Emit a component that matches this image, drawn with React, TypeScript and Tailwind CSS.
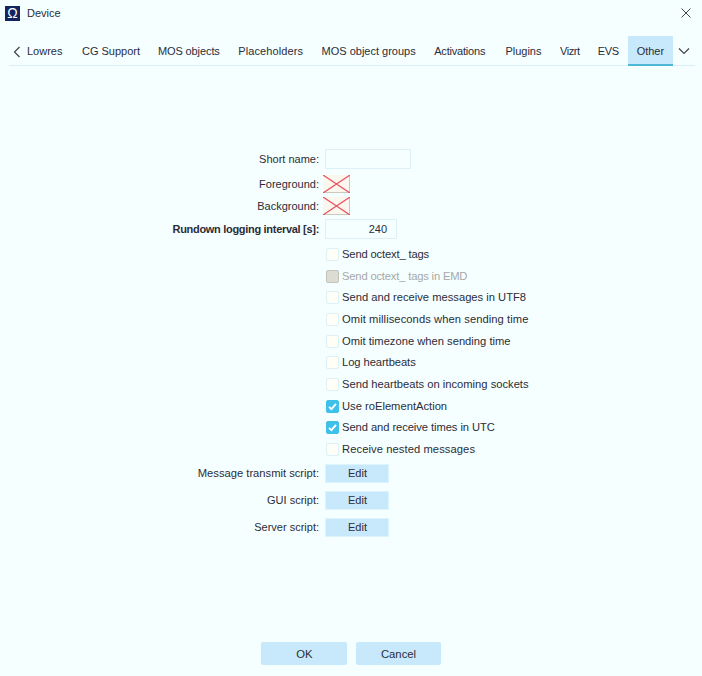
import React from "react";

function X() {
  return (
    <svg width="27" height="18" viewBox="0 0 27 18" className="block">
      <rect x="0" y="0" width="27" height="18" fill="#fbf7ee" />
      <path d="M0 17.5H27M26.5 0V18" stroke="#c9c9c0" strokeWidth="1" fill="none" />
      <path d="M0 0L27 18M27 0L0 18" stroke="#e8505f" strokeWidth="1.2" fill="none" />
    </svg>
  );
}

function Row({ label, labelClass, className, children }: { label?: string; labelClass?: string; className?: string; children?: React.ReactNode }) {
  return (
    <div className={"flex items-center " + (className ?? "")}>
      <div className={"w-[319px] text-right shrink-0 " + (labelClass ?? "")}>{label}</div>
      {children}
    </div>
  );
}

const tabs: [string, string][] = [
  ["Lowres", "mr-px"],
  ["CG Support", "-mr-[0.7px]"],
  ["MOS objects", "tracking-[-0.1px]"],
  ["Placeholders", "tracking-[0.1px]"],
  ["MOS object groups", ""],
  ["Activations", "tracking-[-0.2px] mr-[1.7px]"],
  ["Plugins", ""],
  ["Vizrt", "tracking-[-0.4px] -mr-[0.5px]"],
  ["EVS", "tracking-[-0.3px]"],
];

const checks: [string, string, string][] = [
  ["Send octext_ tags", "", "tracking-[-0.15px]"],
  ["Send octext_ tags in EMD", "d", "tracking-[-0.17px]"],
  ["Send and receive messages in UTF8", "", ""],
  ["Omit milliseconds when sending time", "", "tracking-[0.07px]"],
  ["Omit timezone when sending time", "", ""],
  ["Log heartbeats", "", "tracking-[-0.07px]"],
  ["Send heartbeats on incoming sockets", "", ""],
  ["Use roElementAction", "c", ""],
  ["Send and receive times in UTC", "c", "tracking-[-0.07px]"],
  ["Receive nested messages", "", "tracking-[0.08px]"],
];

export default function App() {
  return (
    <div className="w-[702px] h-[676px] bg-[#f5ffff] text-[#2c2c38] text-[11px] flex flex-col overflow-hidden" style={{ fontFamily: '"Liberation Sans", Arial, sans-serif' }}>
      <div className="h-[26px] flex items-center pl-[5px] pr-[10px] shrink-0">
        <div className="w-[15px] h-[15px] bg-[#14245e] text-white flex items-center justify-center text-[14px] leading-none">Ω</div>
        <span className="ml-[7px] flex-1">Device</span>
        <svg width="12" height="12" viewBox="0 0 12 12">
          <path d="M1.5 1.5L10.5 10.5M10.5 1.5L1.5 10.5" stroke="#444" strokeWidth="1" fill="none" />
        </svg>
      </div>
      <div className="h-[30px] mt-[10px] ml-[9px] mr-[7px] flex items-stretch border-b border-[#d8f0f4] shrink-0">
        <div className="w-[18px] flex items-center pl-[4px] pt-[2px]">
          <svg width="8" height="12" viewBox="0 0 8 12">
            <path d="M6.5 1L1.5 6L6.5 11" stroke="#444" strokeWidth="1.2" fill="none" />
          </svg>
        </div>
        <div className="flex items-center gap-[18.5px] pt-[2px]">
          {tabs.map(([t, c]) => (
            <span key={t} className={c}>{t}</span>
          ))}
        </div>
        <div className="ml-[9px] w-[45px] bg-[#c8e9fb] border-b-2 border-[#4fb8d8] flex items-center justify-center -mb-px pt-[3px]">Other</div>
        <div className="ml-[5px] flex items-center">
          <svg width="12" height="8" viewBox="0 0 12 8">
            <path d="M1 1.5L6 6.5L11 1.5" stroke="#444" strokeWidth="1.2" fill="none" />
          </svg>
        </div>
      </div>
      <div className="flex-1 flex flex-col pt-[83px]">
        <Row label="Short name:" className="h-[20px]">
          <div className="ml-[6px] w-[86px] h-[20px] border border-[#dcf0f6]" />
        </Row>
        <Row label="Foreground:" className="h-[18px] mt-[6px]">
          <div className="ml-[4px]"><X /></div>
        </Row>
        <Row label="Background:" className="h-[18px] mt-[4px]">
          <div className="ml-[4px]"><X /></div>
        </Row>
        <Row label="Rundown logging interval [s]:" labelClass="font-bold tracking-[-0.3px]" className="h-[20px] mt-[4px]">
          <div className="ml-[6px] w-[72px] h-[20px] border border-[#dcf0f6] flex items-center justify-end pr-[9px]">240</div>
        </Row>
        <div className="pl-[326px] mt-[4.7px] flex flex-col text-[11.2px]">
          {checks.map(([l, f, c]) => (
            <div key={l} className="h-[21.67px] flex items-center">
              <div
                className={
                  "w-[13px] h-[13px] mr-[3px] rounded-[2px] border flex items-center justify-center " +
                  (f === "c"
                    ? "bg-[#3fc0e8] border-[#3fc0e8]"
                    : f === "d"
                    ? "bg-[#dcdcd2] border-[#c0c4bc]"
                    : "bg-[#fffff8] border-[#dcf0f6]")
                }
              >
                {f === "c" && (
                  <svg width="11" height="11" viewBox="0 0 11 11">
                    <path d="M2 5.8L4.4 8.2L9 2.8" stroke="#fff" strokeWidth="1.8" fill="none" />
                  </svg>
                )}
              </div>
              <span className={c + (f === "d" ? " text-[#a6a8a8]" : "")}>{l}</span>
            </div>
          ))}
        </div>
        <div className="flex flex-col gap-[8px] mt-[3.7px]">
          <Row label="Message transmit script:" labelClass="text-[11.2px]" className="h-[19px]">
            <button className="ml-[6px] w-[64px] h-[19px] bg-[#c8e9fb] border border-[#dcf4fb] pl-px">Edit</button>
          </Row>
          <Row label="GUI script:" className="h-[19px]">
            <button className="ml-[6px] w-[64px] h-[19px] bg-[#c8e9fb] border border-[#dcf4fb] pl-px">Edit</button>
          </Row>
          <Row label="Server script:" className="h-[19px]">
            <button className="ml-[6px] w-[64px] h-[19px] bg-[#c8e9fb] border border-[#dcf4fb] pl-px">Edit</button>
          </Row>
        </div>
        <div className="mt-auto mb-[11px] flex justify-center gap-[9px] text-[11.3px]">
          <button className="w-[86px] h-[23px] bg-[#c8e9fb] rounded-[2px] pt-px pl-px">OK</button>
          <button className="w-[85px] h-[23px] bg-[#c8e9fb] rounded-[2px] pt-px">Cancel</button>
        </div>
      </div>
    </div>
  );
}
